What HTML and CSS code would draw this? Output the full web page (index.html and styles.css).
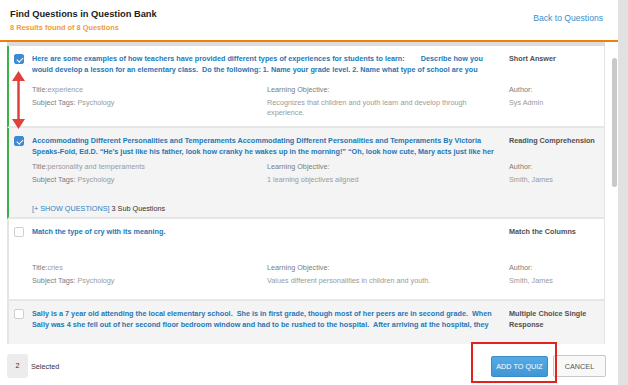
FILE: index.html
```html
<!DOCTYPE html>
<html lang="en">
<head>
    <meta charset="UTF-8">
    <meta name="viewport" content="width=device-width, initial-scale=1.0">
    <title>Find Questions in Question Bank</title>
    <link rel="stylesheet" href="styles.css">
</head>
<body>
    <div class="page">
        <div class="dialog">
            <div class="dialog-header">
                <div>
                    <h1>Find Questions in Question Bank</h1>
                    <p class="results">8 Results found of 8 Questions</p>
                </div>
                <a href="#" class="back-link">Back to Questions</a>
            </div>

            <div class="dialog-body">
                <div class="question-list">
                    <!-- question 1 -->
                    <div class="question selected">
                        <span class="check checked"></span>
                        <div class="q-text">Here are some examples of how teachers have provided different types of experiences for students to learn:&nbsp;&nbsp;&nbsp;&nbsp;&nbsp;&nbsp;&nbsp; Describe how you would develop a lesson for an elementary class.&nbsp; Do the following: 1. Name your grade level. 2. Name what type of school are you teaching in and describe the students.</div>
                        <div class="q-type">Short Answer</div>
                        <div class="meta info">
                            <div><span class="label">Title:</span>experience</div>
                            <div><span class="label">Subject Tags:</span> Psychology</div>
                        </div>
                        <div class="meta">
                            <div class="label">Learning Objective:</div>
                            <div>Recognizes that children and youth learn and develop through experience.</div>
                        </div>
                        <div class="meta author">
                            <div class="label">Author:</div>
                            <div>Sys Admin</div>
                        </div>
                    </div>

                    <!-- question 2 -->
                    <div class="question selected alt">
                        <span class="check checked"></span>
                        <div class="q-text">Accommodating Different Personalities and Temperaments Accommodating Different Personalities and Temperaments By Victoria Speaks-Fold, Ed.D. “He’s just like his father, look how cranky he wakes up in the morning!” “Oh, look how cute, Mary acts just like her mother.” “She is so shy.”</div>
                        <div class="q-type">Reading Comprehension</div>
                        <div class="meta info">
                            <div><span class="label">Title:</span>personality and temperaments</div>
                            <div><span class="label">Subject Tags:</span> Psychology</div>
                        </div>
                        <div class="meta">
                            <div class="label">Learning Objective:</div>
                            <div>1 learning objectives aligned</div>
                        </div>
                        <div class="meta author">
                            <div class="label">Author:</div>
                            <div>Smith, James</div>
                        </div>
                        <div class="sub-questions"><a href="#">[+ SHOW QUESTIONS]</a> 3 Sub Questions</div>
                    </div>

                    <!-- question 3 -->
                    <div class="question">
                        <span class="check"></span>
                        <div class="q-text">Match the type of cry with its meaning.</div>
                        <div class="q-type">Match the Columns</div>
                        <div class="meta info">
                            <div><span class="label">Title:</span>cries</div>
                            <div><span class="label">Subject Tags:</span> Psychology</div>
                        </div>
                        <div class="meta">
                            <div class="label">Learning Objective:</div>
                            <div>Values different personalities in children and youth.</div>
                        </div>
                        <div class="meta author">
                            <div class="label">Author:</div>
                            <div>Smith, James</div>
                        </div>
                    </div>

                    <!-- question 4 -->
                    <div class="question alt">
                        <span class="check"></span>
                        <div class="q-text">Sally is a 7 year old attending the local elementary school.&nbsp; She is in first grade, though most of her peers are in second grade.&nbsp; When Sally was 4 she fell out of her second floor bedroom window and had to be rushed to the hospital.&nbsp; After arriving at the hospital, they discovered she had a head injury.</div>
                        <div class="q-type">Multiple Choice Single Response</div>
                        <div class="meta info">
                            <div><span class="label">Title:</span>impairment</div>
                            <div><span class="label">Subject Tags:</span> Psychology</div>
                        </div>
                        <div class="meta">
                            <div class="label">Learning Objective:</div>
                            <div>1 learning objectives aligned</div>
                        </div>
                        <div class="meta author">
                            <div class="label">Author:</div>
                            <div>Smith, James</div>
                        </div>
                    </div>
                </div>

                <div class="scrollbar"><div class="thumb"></div></div>

                <!-- annotation arrow -->
                <svg class="drag-arrow" width="13" height="58" viewBox="0 0 13 58">
                    <line x1="6.5" y1="7" x2="6.5" y2="51" stroke="#e2403a" stroke-width="2.5"/>
                    <polygon points="6.5,0 0,10 13,10" fill="#e2403a"/>
                    <polygon points="6.5,58 0,48 13,48" fill="#e2403a"/>
                </svg>
            </div>

            <div class="dialog-footer">
                <span class="count">2</span>
                <span class="selected-label">Selected</span>
                <div class="actions">
                    <span class="highlight"><button class="btn primary">ADD TO QUIZ</button></span>
                    <button class="btn">CANCEL</button>
                </div>
            </div>
        </div>
        <div class="page-scroll"></div>
    </div>
</body>
</html>
```

FILE: styles.css
```css
* {
    box-sizing: border-box;
}

body {
    margin: 0;
    font-family: "Liberation Sans", Arial, sans-serif;
    background: #fff;
}

.page {
    display: flex;
    width: 628px;
    height: 385px;
}

.dialog {
    width: 618px;
    height: 385px;
    display: flex;
    flex-direction: column;
    background: white;
}

.page-scroll {
    flex: 1;
    background: #e1e1e1;
}

/* header */
.dialog-header {
    display: flex;
    justify-content: space-between;
    align-items: flex-start;
    height: 42px;
    padding: 9px 15px 0 10px;
    border-bottom: 2px solid #f07f0e;
}

h1 {
    margin: 0;
    font-size: 9.3px;
    line-height: 11px;
    color: #222;
}

.results {
    margin: 3px 0 0;
    font-size: 7.4px;
    font-weight: bold;
    line-height: 10px;
    color: #f39a3c;
}

.back-link {
    margin-top: 4px;
    font-size: 8.6px;
    line-height: 11px;
    color: #3b8dc9;
    text-decoration: none;
}

/* list */
.dialog-body {
    position: relative;
    display: flex;
    height: 302px;
    overflow: hidden;
}

.question-list {
    width: 598px;
    margin-left: 7px;
    border-top: 4px solid #dcdcdc;
}

.question {
    display: grid;
    grid-template-columns: 18px 235px 235px 1fr;
    align-items: start;
    min-height: 82px;
    padding: 8px 5px 3px 5px;
    background: white;
    border-left: 2px solid #e4e4e4;
    border-right: 1px solid #e4e4e4;
    border-bottom: 2px solid #e6e6e6;
    font-size: 7.25px;
    line-height: 10.5px;
}

.question.alt {
    background: #f4f4f4;
}

.question.selected {
    border-left-color: #3cb14a;
}

.check {
    position: relative;
    width: 10px;
    height: 10px;
    border: 1px solid #cfcfcf;
    border-radius: 2px;
    background: white;
}

.check.checked {
    background: #3b8bd6;
    border-color: #3b8bd6;
}

.check.checked::after {
    content: "";
    position: absolute;
    left: 2.5px;
    top: 0.5px;
    width: 2.5px;
    height: 5px;
    border-right: 1.5px solid white;
    border-bottom: 1.5px solid white;
    transform: rotate(45deg);
}

.q-text {
    grid-column: 2 / 4;
    height: 21px;
    overflow: hidden;
    font-weight: bold;
    color: #2477b6;
}

.q-type {
    padding-left: 7px;
    font-weight: bold;
    color: #505050;
}

.meta {
    margin-top: 5px;
    padding-right: 12px;
    color: #9a9a9a;
}

.meta.info {
    grid-column: 2;
}

.meta div + div {
    margin-top: 2.5px;
}

.meta .label {
    color: #7c7c7c;
}

.meta.author {
    padding-left: 7px;
}

.sub-questions {
    grid-column: 2 / -1;
    margin-top: 18px;
    color: #333;
}

.sub-questions a {
    color: #2f80bf;
    text-decoration: none;
}

.scrollbar {
    width: 13px;
}

.thumb {
    width: 5px;
    height: 129px;
    margin: 16px 0 0 7px;
    border-radius: 3px;
    background: #c9c9c9;
}

.drag-arrow {
    position: absolute;
    left: 12px;
    top: 29px;
}

/* footer */
.dialog-footer {
    display: flex;
    align-items: center;
    height: 41px;
    padding: 3px 12px 0 7px;
    font-size: 7.25px;
    color: #333;
}

.count {
    width: 21px;
    height: 24px;
    line-height: 24px;
    text-align: center;
    border-radius: 3px;
    background: #ececec;
}

.selected-label {
    margin-left: 3px;
}

.actions {
    margin-left: auto;
    display: flex;
    align-items: center;
    gap: 5px;
}

.btn {
    width: 53px;
    height: 22px;
    padding: 0;
    font-family: inherit;
    font-size: 7.25px;
    color: #555;
    background: #f8f8f8;
    border: 1px solid #c8c8c8;
    border-radius: 2px;
}

.btn.primary {
    width: 57px;
    height: 21px;
    color: white;
    background: linear-gradient(#55aae2, #3f97d6);
    border-color: #3a8bc8;
}

.highlight {
    position: relative;
    display: flex;
}

.highlight::after {
    content: "";
    position: absolute;
    left: -20px;
    right: -9px;
    top: -14px;
    bottom: -6px;
    border: 2px solid #e3211d;
}
```
